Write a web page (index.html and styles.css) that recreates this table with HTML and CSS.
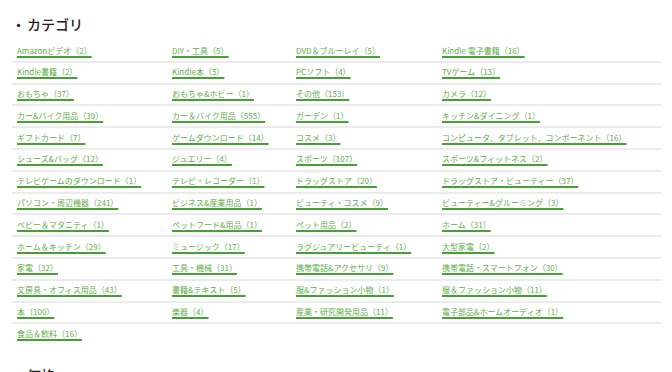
FILE: index.html
```html
<!DOCTYPE html>
<html lang="ja">
<head>
<meta charset="utf-8">
<title>カテゴリ</title>
<link rel="stylesheet" href="styles.css">
</head>
<body>
<div class="page">
  <section class="section">
    <h2 class="heading"><span class="dot">・</span>カテゴリ</h2>
    <div class="list">
      <div class="row"><a class="cat" href="#">Amazonビデオ（2）</a><a class="cat" href="#">DIY・工具（5）</a><a class="cat" href="#">DVD＆ブルーレイ（5）</a><a class="cat" href="#">Kindle 電子書籍（16）</a></div>
      <div class="row"><a class="cat" href="#">Kindle書籍（2）</a><a class="cat" href="#">Kindle本（5）</a><a class="cat" href="#">PCソフト（4）</a><a class="cat" href="#">TVゲーム（13）</a></div>
      <div class="row"><a class="cat" href="#">おもちゃ（37）</a><a class="cat" href="#">おもちゃ&amp;ホビー（1）</a><a class="cat" href="#">その他（153）</a><a class="cat" href="#">カメラ（12）</a></div>
      <div class="row"><a class="cat" href="#">カー&amp;バイク用品（39）</a><a class="cat" href="#">カー＆バイク用品（555）</a><a class="cat" href="#">ガーデン（1）</a><a class="cat" href="#">キッチン&amp;ダイニング（1）</a></div>
      <div class="row"><a class="cat" href="#">ギフトカード（7）</a><a class="cat" href="#">ゲームダウンロード（14）</a><a class="cat" href="#">コスメ（3）</a><a class="cat" href="#">コンピュータ、タブレット、コンポーネント（16）</a></div>
      <div class="row"><a class="cat" href="#">シューズ&amp;バッグ（12）</a><a class="cat" href="#">ジュエリー（4）</a><a class="cat" href="#">スポーツ（107）</a><a class="cat" href="#">スポーツ&amp;フィットネス（2）</a></div>
      <div class="row"><a class="cat" href="#">テレビゲームのダウンロード（1）</a><a class="cat" href="#">テレビ・レコーダー（1）</a><a class="cat" href="#">ドラッグストア（20）</a><a class="cat" href="#">ドラッグストア・ビューティー（37）</a></div>
      <div class="row"><a class="cat" href="#">パソコン・周辺機器（241）</a><a class="cat" href="#">ビジネス&amp;産業用品（1）</a><a class="cat" href="#">ビューティ・コスメ（9）</a><a class="cat" href="#">ビューティー&amp;グルーミング（3）</a></div>
      <div class="row"><a class="cat" href="#">ベビー＆マタニティ（1）</a><a class="cat" href="#">ペットフード&amp;用品（1）</a><a class="cat" href="#">ペット用品（2）</a><a class="cat" href="#">ホーム（31）</a></div>
      <div class="row"><a class="cat" href="#">ホーム＆キッチン（29）</a><a class="cat" href="#">ミュージック（17）</a><a class="cat" href="#">ラグジュアリービューティ（1）</a><a class="cat" href="#">大型家電（2）</a></div>
      <div class="row"><a class="cat" href="#">家電（32）</a><a class="cat" href="#">工具・機械（31）</a><a class="cat" href="#">携帯電話&amp;アクセサリ（9）</a><a class="cat" href="#">携帯電話・スマートフォン（30）</a></div>
      <div class="row"><a class="cat" href="#">文房具・オフィス用品（43）</a><a class="cat" href="#">書籍&amp;テキスト（5）</a><a class="cat" href="#">服&amp;ファッション小物（1）</a><a class="cat" href="#">服＆ファッション小物（11）</a></div>
      <div class="row"><a class="cat" href="#">本（100）</a><a class="cat" href="#">楽器（4）</a><a class="cat" href="#">産業・研究開発用品（11）</a><a class="cat" href="#">電子部品&amp;ホームオーディオ（1）</a></div>
      <div class="row last"><a class="cat" href="#">食品＆飲料（16）</a></div>
    </div>
  </section>
  <section class="section">
    <h2 class="heading"><span class="dot">・</span>価格</h2>
  </section>
</div>
</body>
</html>
```
FILE: styles.css
```css
html, body {
  margin: 0;
  padding: 0;
  background: #ffffff;
}

body {
  font-family: "Noto Sans CJK JP", "Noto Sans", sans-serif;
  color: #333333;
}

.page {
  display: flex;
  flex-direction: column;
  gap: 21px;
  padding: 14px 11px 0 12px;
}

.section {
  display: flex;
  flex-direction: column;
  gap: 7px;
}

.heading {
  margin: 0;
  font-size: 14px;
  line-height: 20px;
  font-weight: 500;
  color: #222222;
  padding-left: 5px;
}

.dot {
  margin-left: -5.5px;
  margin-right: 1.5px;
}

.list {
  display: flex;
  flex-direction: column;
}

.row {
  display: grid;
  grid-template-columns: 155px 124px 146px 1fr;
  border-bottom: 2px solid #ebebeb;
  padding: 3.5px 0;
  line-height: 12.8px;
}

.row.last {
  border-bottom: none;
}

.cat {
  justify-self: start;
  margin-left: 5px;
  font-size: 8px;
  color: #5eae48;
  text-decoration: underline;
  text-decoration-color: #47a033;
  text-decoration-thickness: 1.5px;
  text-underline-offset: 2px;
  white-space: nowrap;
}
```
